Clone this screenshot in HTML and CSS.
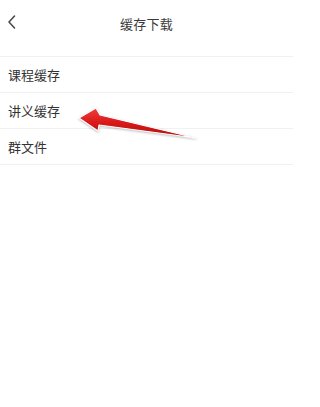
FILE: index.html
```html
<!DOCTYPE html>
<html lang="zh">
<head>
<meta charset="utf-8">
<link rel="stylesheet" href="styles.css">
</head>
<body>
<div class="page">
  <header class="nav">
    <span class="back">
      <svg width="10" height="16" viewBox="0 0 10 16"><path d="M7.5 2 L2 8 L7.5 14" fill="none" stroke="#4a4a4a" stroke-width="1.6" stroke-linecap="round" stroke-linejoin="round"/></svg>
    </span>
    <h1 class="title">缓存下载</h1>
  </header>
  <ul class="list">
    <li class="row">课程缓存</li>
    <li class="row">讲义缓存</li>
    <li class="row">群文件</li>
  </ul>
  <svg class="arrow" width="293" height="407" viewBox="0 0 293 407">
    <defs>
      <linearGradient id="g" x1="0" y1="0" x2="0" y2="1">
        <stop offset="0" stop-color="#f04040"/>
        <stop offset="0.5" stop-color="#d81818"/>
        <stop offset="1" stop-color="#b01010"/>
      </linearGradient>
    </defs>
    <polygon points="79,118 96,108 100,115 196,138 99,125 98,131" fill="url(#g)" stroke="#ffffff" stroke-width="1.2" stroke-linejoin="round"/>
  </svg>
</div>
</body>
</html>
```
FILE: styles.css
```css
html, body {
  margin: 0;
  padding: 0;
  background: #ffffff;
}
body {
  font-family: "Noto Sans CJK SC", "Noto Sans", sans-serif;
  color: #333333;
}
.page {
  position: relative;
  width: 293px;
  height: 407px;
  overflow: hidden;
}
.nav {
  position: relative;
  height: 46px;
  display: flex;
  align-items: center;
  justify-content: center;
}
.back {
  position: absolute;
  left: 7px;
  top: 14px;
  display: flex;
}
.title {
  margin: 0;
  font-size: 13px;
  font-weight: normal;
  color: #3a3a3a;
  letter-spacing: 0.3px;
}
.list {
  list-style: none;
  margin: 10px 0 0 0;
  padding: 0;
  border-top: 1px solid #f1f1f1;
}
.row {
  height: 35px;
  display: flex;
  align-items: center;
  padding-left: 8px;
  font-size: 13px;
  color: #333333;
  border-bottom: 1px solid #f1f1f1;
}
.arrow {
  position: absolute;
  left: 0;
  top: 0;
  filter: drop-shadow(0 1px 1px rgba(0,0,0,0.25));
}
```
